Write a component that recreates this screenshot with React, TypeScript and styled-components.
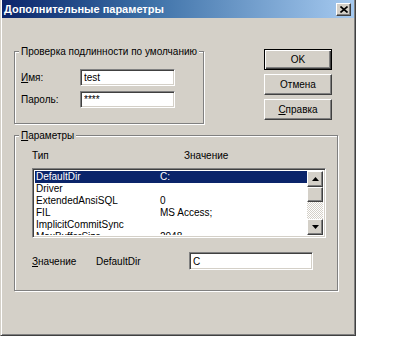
import React from "react";
import styled, { createGlobalStyle, css } from "styled-components";

const Global = createGlobalStyle`
  html, body { margin: 0; padding: 0; background: #ffffff; }
  body { font-family: "Liberation Sans", Arial, sans-serif; font-size: 10px; color: #000; }
  * { box-sizing: border-box; }
`;

const raised = css`
  border: 1px solid;
  border-color: #ffffff #404040 #404040 #ffffff;
  box-shadow: inset -1px -1px #808080, inset 1px 1px #d4d0c8;
  background: #d4d0c8;
`;

const sunken = css`
  border: 1px solid;
  border-color: #808080 #ffffff #ffffff #808080;
  box-shadow: inset 1px 1px #404040, inset -1px -1px #d4d0c8;
`;

const Window = styled.div`
  width: 356px;
  height: 336px;
  display: flex;
  flex-direction: column;
  background: #d4d0c8;
  border: 1px solid;
  border-top: none;
  border-color: #d4d0c8 #404040 #404040 #d4d0c8;
  box-shadow: inset 1px 0 #ffffff, inset -1px -1px #808080;
  padding: 0 1px 1px 1px;
`;

const TitleBar = styled.div`
  height: 18px;
  display: flex;
  align-items: center;
  justify-content: space-between;
  padding: 0 3px 0 2px;
  background: linear-gradient(to right, #0a246a 0%, #3a6ea5 40%, #a6caf0 100%);
`;

const Title = styled.span`
  color: #ffffff;
  font-weight: bold;
  font-size: 11px;
`;

const CloseButton = styled.div`
  ${raised};
  width: 15px;
  height: 13px;
  display: flex;
  align-items: center;
  justify-content: center;
`;

const Body = styled.div`
  flex: 1;
  padding: 31px 0 0 12px;
  display: flex;
  flex-direction: column;
`;

const TopRow = styled.div`
  width: 324px;
  display: flex;
  justify-content: space-between;
  align-items: flex-start;
  padding-right: 6px;
`;

const GroupFrame = styled.div<{ $w: number; $h: number; $mt: number }>`
  position: relative;
  width: ${(p) => p.$w}px;
  height: ${(p) => p.$h}px;
  margin-top: ${(p) => p.$mt}px;
  border: 1px solid #808080;
  box-shadow: inset 1px 1px #ffffff, 1px 1px #ffffff;
`;

const GroupLegend = styled.span`
  position: absolute;
  top: -7px;
  left: 4px;
  padding: 0 2px;
  line-height: 13px;
  background: #d4d0c8;
  white-space: nowrap;
`;

const AuthFields = styled.div`
  padding: 17px 0 0 6px;
  display: flex;
  flex-direction: column;
  gap: 5px;
`;

const FieldRow = styled.div`
  display: flex;
  align-items: center;
`;

const Label = styled.span<{ $w: number }>`
  width: ${(p) => p.$w}px;
  flex: none;
  line-height: 13px;
  white-space: nowrap;
`;

const TextBox = styled.input<{ $w: number; $h: number }>`
  ${sunken};
  width: ${(p) => p.$w}px;
  height: ${(p) => p.$h}px;
  background: #ffffff;
  font: inherit;
  font-size: 10px;
  padding: 0 0 0 3px;
  margin: 0;
  outline: none;
  color: #000;
`;

const ButtonColumn = styled.div`
  display: flex;
  flex-direction: column;
  gap: 4px;
`;

const PushButton = styled.div<{ $default?: boolean }>`
  ${raised};
  width: 68px;
  height: 21px;
  display: flex;
  align-items: center;
  justify-content: center;
  ${(p) =>
    p.$default &&
    css`
      border-color: #000000;
      box-shadow: inset 1px 1px #ffffff, inset -1px -1px #404040, inset -2px -2px #808080;
    `}
`;

const ParamsInner = styled.div`
  padding: 13px 0 0 17px;
  display: flex;
  flex-direction: column;
`;

const HeaderRow = styled.div`
  display: flex;
  line-height: 13px;
`;

const HeaderCell = styled.span<{ $w?: number }>`
  width: ${(p) => (p.$w ? `${p.$w}px` : "auto")};
  flex: none;
`;

const ListBox = styled.div`
  ${sunken};
  margin-top: 6px;
  width: 294px;
  height: 70px;
  background: #ffffff;
  padding: 2px;
  display: flex;
  overflow: hidden;
`;

const ListRows = styled.div`
  flex: 1;
  overflow: hidden;
`;

const ListRow = styled.div<{ $selected?: boolean }>`
  display: flex;
  height: 12px;
  line-height: 12px;
  padding-left: 1px;
  white-space: nowrap;
  background: ${(p) => (p.$selected ? "#0a246a" : "transparent")};
  color: ${(p) => (p.$selected ? "#ffffff" : "#000000")};
`;

const NameCell = styled.span`
  width: 124px;
  flex: none;
`;

const ScrollBar = styled.div`
  width: 16px;
  flex: none;
  display: flex;
  flex-direction: column;
  background: repeating-conic-gradient(#ffffff 0 25%, #d4d0c8 0 50%) 0 0 / 2px 2px;
`;

const ScrollButton = styled.div`
  ${raised};
  width: 16px;
  height: 16px;
  flex: none;
  display: flex;
  align-items: center;
  justify-content: center;
`;

const Thumb = styled.div`
  ${raised};
  width: 16px;
  height: 15px;
  flex: none;
`;

const Track = styled.div`
  flex: 1;
`;

const ValueRow = styled.div`
  margin-top: 14px;
  display: flex;
  align-items: center;
`;

const rows: [string, string][] = [
  ["DefaultDir", "C:"],
  ["Driver", ""],
  ["ExtendedAnsiSQL", "0"],
  ["FIL", "MS Access;"],
  ["ImplicitCommitSync", ""],
  ["MaxBufferSize", "2048"],
];

const Arrow = ({ up }: { up?: boolean }) => (
  <svg width="7" height="4" viewBox="0 0 7 4">
    <polygon points={up ? "3.5,0 7,4 0,4" : "0,0 7,0 3.5,4"} fill="#000" />
  </svg>
);

export default function App() {
  return (
    <>
      <Global />
      <Window>
        <TitleBar>
          <Title>Дополнительные параметры</Title>
          <CloseButton>
            <svg width="8" height="7" viewBox="0 0 8 7">
              <path d="M0.5 0.5 L7.5 6.5 M7.5 0.5 L0.5 6.5" stroke="#000" strokeWidth="1.6" />
            </svg>
          </CloseButton>
        </TitleBar>
        <Body>
          <TopRow>
            <GroupFrame $w={190} $h={73} $mt={2}>
              <GroupLegend>Проверка подлинности по умолчанию</GroupLegend>
              <AuthFields>
                <FieldRow>
                  <Label $w={59}>
                    <u>И</u>мя:
                  </Label>
                  <TextBox $w={95} $h={17} readOnly value="test" />
                </FieldRow>
                <FieldRow>
                  <Label $w={59}>Пароль:</Label>
                  <TextBox $w={95} $h={17} readOnly value="****" />
                </FieldRow>
              </AuthFields>
            </GroupFrame>
            <ButtonColumn>
              <PushButton $default>OK</PushButton>
              <PushButton>Отмена</PushButton>
              <PushButton>
                <span>
                  <u>С</u>правка
                </span>
              </PushButton>
            </ButtonColumn>
          </TopRow>
          <GroupFrame $w={324} $h={156} $mt={11}>
            <GroupLegend>
              <u>П</u>араметры
            </GroupLegend>
            <ParamsInner>
              <HeaderRow>
                <HeaderCell $w={152}>Тип</HeaderCell>
                <HeaderCell>Значение</HeaderCell>
              </HeaderRow>
              <ListBox>
                <ListRows>
                  {rows.map(([n, v], i) => (
                    <ListRow key={n} $selected={i === 0}>
                      <NameCell>{n}</NameCell>
                      <span>{v}</span>
                    </ListRow>
                  ))}
                </ListRows>
                <ScrollBar>
                  <ScrollButton>
                    <Arrow up />
                  </ScrollButton>
                  <Thumb />
                  <Track />
                  <ScrollButton>
                    <Arrow />
                  </ScrollButton>
                </ScrollBar>
              </ListBox>
              <ValueRow>
                <Label $w={64}>
                  <u>З</u>начение
                </Label>
                <Label $w={93}>DefaultDir</Label>
                <TextBox $w={124} $h={18} readOnly value="C" />
              </ValueRow>
            </ParamsInner>
          </GroupFrame>
        </Body>
      </Window>
    </>
  );
}
